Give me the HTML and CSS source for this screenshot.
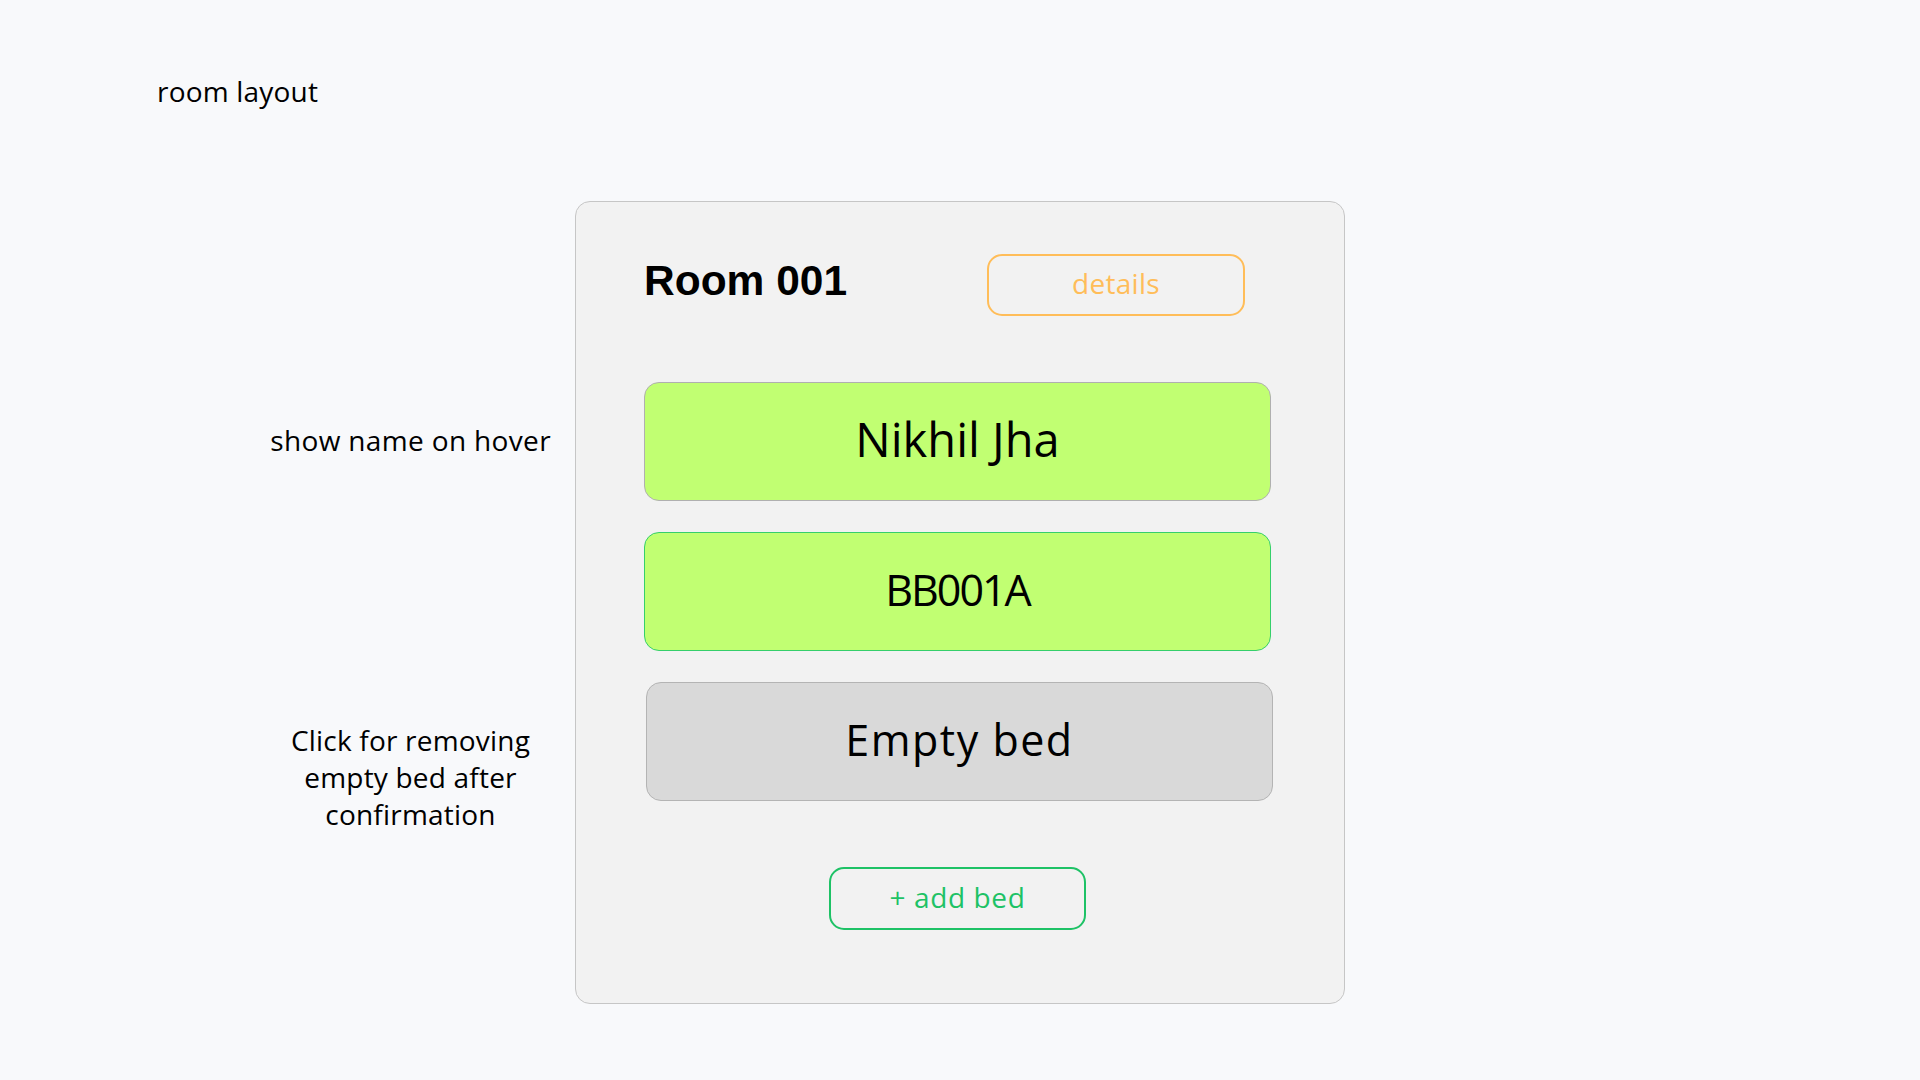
FILE: index.html
```html
<!DOCTYPE html>
<html lang="en">
<head>
<meta charset="utf-8">
<title>room layout</title>
<link rel="stylesheet" href="styles.css">
</head>
<body>
  <header class="page-title">room layout</header>
  <main class="board">
    <aside class="notes">
      <p class="note note-hover">show name on hover</p>
      <p class="note note-remove">Click for removing empty bed after confirmation</p>
    </aside>
    <section class="room-card">
      <div class="room-head">
        <h1 class="room-name">Room 001</h1>
        <button class="btn btn-details">details</button>
      </div>
      <div class="beds">
        <div class="bed bed-occupied bed-name">Nikhil Jha</div>
        <div class="bed bed-occupied bed-id">BB001A</div>
        <div class="bed bed-empty">Empty bed</div>
      </div>
      <div class="add-row">
        <button class="btn btn-add">+ add bed</button>
      </div>
    </section>
  </main>
</body>
</html>
```

FILE: styles.css
```css
* {
  box-sizing: border-box;
}

html, body {
  margin: 0;
  padding: 0;
}

body {
  background: #f8f9fb;
  font-family: "Open Sans", "Noto Sans", sans-serif;
  color: #000;
  width: 1920px;
  height: 1080px;
  overflow: hidden;
}

.page-title {
  padding: 72px 0 0 157px;
  font-size: 28px;
  line-height: 38px;
  height: 110px;
  letter-spacing: 0.2px;
}

.board {
  display: flex;
  align-items: flex-start;
  gap: 24px;
  margin-top: 91px;
  padding-left: 270px;
}

.notes {
  width: 281px;
  display: flex;
  flex-direction: column;
}

.note {
  margin: 0;
  font-size: 28px;
}

.note-hover {
  margin-top: 220px;
  line-height: 38px;
  text-align: right;
  white-space: nowrap;
  letter-spacing: 0.35px;
}

.note-remove {
  margin-top: 263px;
  line-height: 37px;
  text-align: center;
  padding: 0 18px;
  letter-spacing: 0.2px;
}

.room-card {
  width: 770px;
  height: 803px;
  background: #f2f2f2;
  border: 1px solid #c6c6c6;
  border-radius: 15px;
  padding: 52px 73px 73px 68px;
  display: flex;
  flex-direction: column;
}

.room-head {
  display: flex;
  align-items: flex-start;
  justify-content: space-between;
  margin-right: 26px;
  height: 62px;
}

.room-name {
  margin: 6px 0 0 0;
  font-family: "Liberation Sans", Arial, sans-serif;
  font-weight: 700;
  font-size: 42.5px;
  line-height: 42px;
}

.btn {
  font-family: "Open Sans", "Noto Sans", sans-serif;
  font-size: 28px;
  background: transparent;
  border-radius: 15px;
  height: 62px;
  width: 258px;
  display: flex;
  align-items: center;
  justify-content: center;
  padding: 0 0 5px 0;
  cursor: pointer;
}

.btn-details {
  border: 2px solid #ffbd59;
  color: #ffbd59;
  letter-spacing: 0.3px;
}

.beds {
  display: flex;
  flex-direction: column;
  gap: 31px;
  margin-top: 66px;
}

.bed {
  height: 119px;
  width: 627px;
  border-radius: 15px;
  display: flex;
  align-items: center;
  justify-content: center;
  padding-bottom: 5px;
  font-size: 43px;
}

.bed-occupied {
  background: #c1ff72;
  border: 1px solid #b0b0b0;
}

.bed-name {
  font-size: 47px;
}

.bed-id {
  border-color: #35cf6c;
  letter-spacing: -2px;
}

.bed-empty {
  background: #d9d9d9;
  border: 1px solid #b4b4b4;
  margin-left: 2px;
  letter-spacing: 1.5px;
}

.add-row {
  display: flex;
  justify-content: center;
  margin-top: 66px;
}

.btn-add {
  border: 2px solid #1ec266;
  color: #1ec266;
  height: 63px;
  width: 257px;
  padding-bottom: 3px;
  letter-spacing: 0.6px;
}
```
